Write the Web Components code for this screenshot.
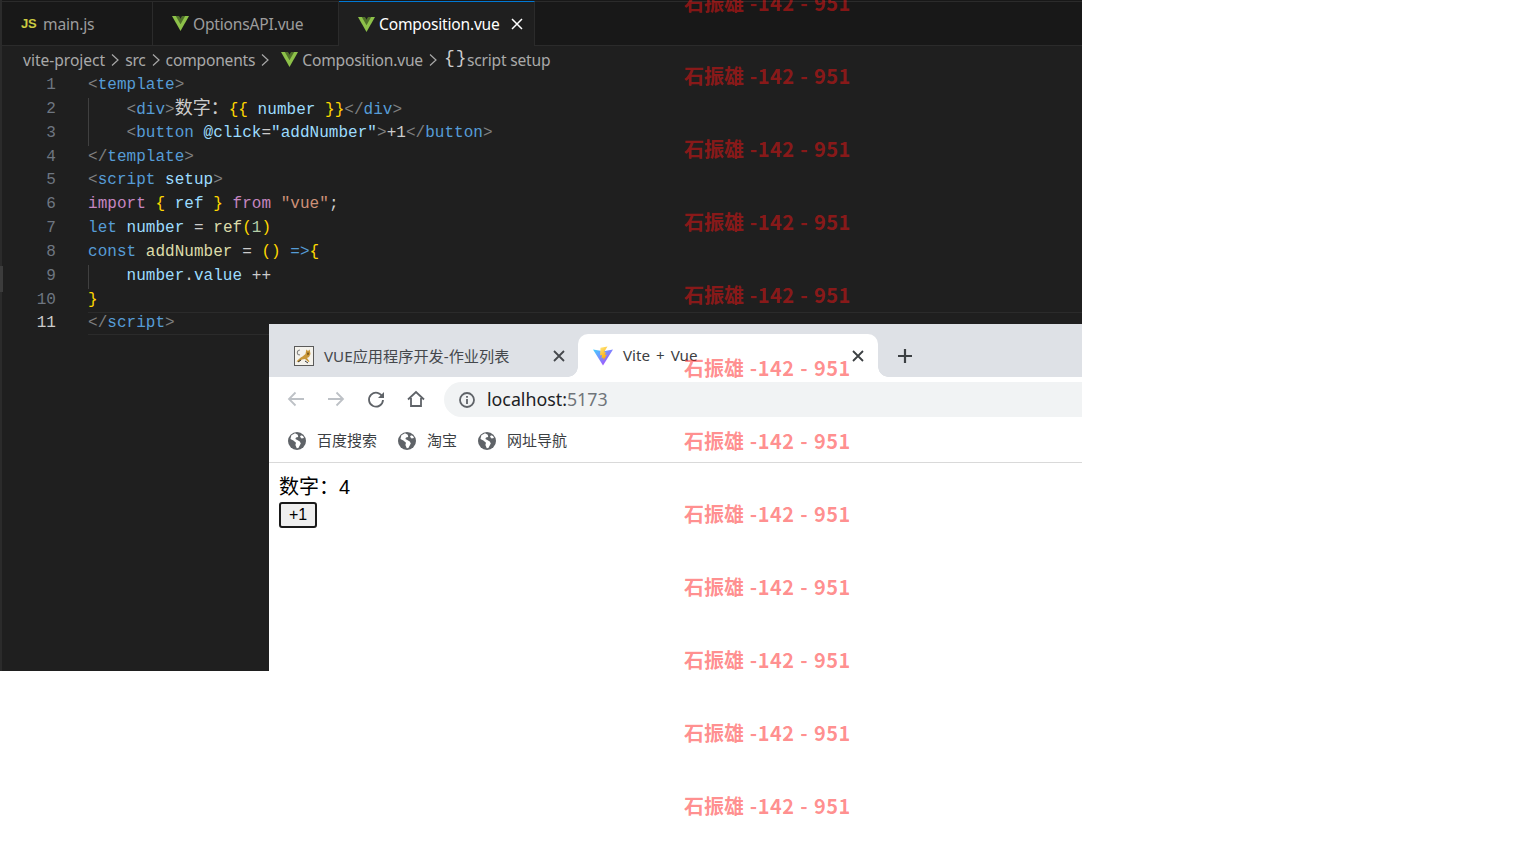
<!DOCTYPE html>
<html><head><meta charset="utf-8"><style>
html,body{margin:0;background:#fff}
</style></head><body>
<desktop-shot>
  <code-editor></code-editor>
  <browser-window></browser-window>
  <water-mark></water-mark>
</desktop-shot>
<script>
const V=(s=17)=>`<svg width="${s}" height="${s}" viewBox="0 0 16 16" style="flex:none"><path d="M0 1h16L8 15z" fill="#8dc149"/><path d="M3.600 1h2.800L8 3.800 9.600 1h2.800L8 8.800z" fill="#4f7029"/><path d="M6.400 1h3.200L8 3.800z" fill="#1f1f1f"/></svg>`;
const chev=`<svg width="10" height="16" viewBox="0 0 10 16" style="flex:none"><path d="M2 2.500 8 8l-6 5.500" fill="none" stroke="#a8a8a8" stroke-width="1.200"/></svg>`;
function def(name,css,html){customElements.define(name,class extends HTMLElement{constructor(){super();this.attachShadow({mode:'open'}).innerHTML=`<style>${css}</style>${typeof html==='function'?html(this):html}`}})}

def('desktop-shot',`:host{display:block;position:relative;width:1536px;height:864px;overflow:hidden;background:#fff}`,`<slot></slot>`);

const ui=`"Noto Sans","Noto Sans CJK SC",sans-serif`;
def('code-editor',`
:host{display:flex;flex-direction:column;position:relative;width:1082px;height:671px;background:#1f1f1f;font-family:${ui};color:#9d9d9d;box-sizing:border-box;border-left:2px solid #2b2b2b}
:host::before{content:"";position:absolute;left:-2px;top:266px;width:3px;height:26px;background:#3c3c3c}
.top{height:1px;background:#181818}
.tabs{display:flex;height:43px;background:#181818;border-top:1px solid #2b2b2b;border-bottom:1px solid #2b2b2b}
.tab{display:flex;align-items:center;box-sizing:border-box;height:43px;border-right:1px solid #2b2b2b;font-size:15.600px;letter-spacing:-.2px}
.t1{width:151px;padding-left:19px;gap:8px}
.t2{width:186px;padding-left:19px;gap:4px}
.t3{width:196px;padding-left:19px;gap:4px;background:#1f1f1f;color:#fff;border-top:1px solid #0078d4;margin-top:-1px;height:45px;margin-bottom:-1px;position:relative}
.js{font:bold 13px "Liberation Sans",sans-serif;color:#cbcb41;width:14px;letter-spacing:-.3px}
.x{margin-left:6px;display:flex}
.crumbs{display:flex;align-items:center;height:27px;padding-left:21px;font-size:15.600px;letter-spacing:-.2px;color:#a9a9a9;gap:5px}
.crumbs .first{letter-spacing:-.03px}
.crumbs .m{margin-left:6px}
.crumbs .br{color:#ccc;font:18px "Liberation Mono",monospace;letter-spacing:1px;width:18px;margin:-3px 0 0 1px;white-space:pre}
.code{display:block;position:relative;margin-top:1px;font:16px/23.850px "Liberation Mono","Noto Sans CJK SC",monospace;white-space:pre;color:#ccc;letter-spacing:.03px}
.l{display:flex;height:23.850px;position:relative}
.n{width:54px;text-align:right;color:#6e7681;flex:none;margin-right:32px}
.cur .n{color:#ccc}
.cur::after{content:"";position:absolute;left:86px;right:0;top:0;bottom:1px;border-top:1px solid #2b2b2b;border-bottom:1px solid #2b2b2b;pointer-events:none}
.g{color:#808080}.b{color:#569cd6}.a{color:#9cdcfe}.y{color:#ffd700}.p{color:#c586c0}.s{color:#ce9178}.f{color:#dcdcaa}.nu{color:#b5cea8}.t{color:#ccc}
.cj{font-size:18px;letter-spacing:0}
.ind{position:absolute;left:86px;top:0;bottom:0;width:1px;background:#404040}
`,()=>{
const lines=[
`<span class="g">&lt;</span><span class="b">template</span><span class="g">&gt;</span>`,
`    <span class="g">&lt;</span><span class="b">div</span><span class="g">&gt;</span><span class="t cj">数字：</span><span class="y">{{</span><span class="a"> number </span><span class="y">}}</span><span class="g">&lt;/</span><span class="b">div</span><span class="g">&gt;</span>`,
`    <span class="g">&lt;</span><span class="b">button</span> <span class="a">@click</span><span class="t">=</span><span class="a">"addNumber"</span><span class="g">&gt;</span><span class="t">+1</span><span class="g">&lt;/</span><span class="b">button</span><span class="g">&gt;</span>`,
`<span class="g">&lt;/</span><span class="b">template</span><span class="g">&gt;</span>`,
`<span class="g">&lt;</span><span class="b">script</span> <span class="a">setup</span><span class="g">&gt;</span>`,
`<span class="p">import</span> <span class="y">{</span> <span class="a">ref</span> <span class="y">}</span> <span class="p">from</span> <span class="s">"vue"</span><span class="t">;</span>`,
`<span class="b">let</span> <span class="a">number</span> <span class="t">=</span> <span class="f">ref</span><span class="y">(</span><span class="nu">1</span><span class="y">)</span>`,
`<span class="b">const</span> <span class="f">addNumber</span> <span class="t">=</span> <span class="y">()</span> <span class="b">=&gt;</span><span class="y">{</span>`,
`    <span class="a">number</span><span class="t">.</span><span class="a">value</span> <span class="t">++</span>`,
`<span class="y">}</span>`,
`<span class="g">&lt;/</span><span class="b">script</span><span class="g">&gt;</span>`];
const ind=[0,1,1,0,0,0,0,0,1,0,0];
return `<div class="top"></div><div class="tabs">
<div class="tab t1"><span class="js">JS</span><span>main.js</span></div>
<div class="tab t2">${V()}<span>OptionsAPI.vue</span></div>
<div class="tab t3">${V()}<span>Composition.vue</span><span class="x"><svg width="14" height="14" viewBox="0 0 14 14"><path d="M2 2l10 10M12 2 2 12" stroke="#fff" stroke-width="1.500"/></svg></span></div>
</div>
<div class="crumbs"><span class="first">vite-project</span>${chev}<span>src</span>${chev}<span>components</span>${chev}<span class="m" style="display:flex;gap:4px;align-items:center">${V()}<span>Composition.vue</span></span>${chev}<span class="br">{}</span><span>script setup</span></div>
<div class="code">${lines.map((l,i)=>`<div class="l${i==10?' cur':''}">${ind[i]?'<i class="ind"></i>':''}<span class="n">${i+1}</span><span class="c">${l}</span></div>`).join('')}</div>`;
});

const globe=`<svg width="18" height="18" viewBox="0 0 18 18" style="flex:none"><circle cx="9" cy="9" r="9" fill="#5f6368"/><path d="M7 1.200 3.400 3.200 2.400 7l3 1.400 2.600 2.400-.6 2.200 1.400 3.200 1.600-.2 2.400-4.400-1-2.200-3-1.600-1.400-.8.6-1.400 2.200-.6-.4-2.200zM13 3.200l-1 1.600 1.600 1.800 2.400-.6-1-2z" fill="#fff"/></svg>`;
const tomcat=`<svg width="20" height="20" viewBox="0 0 20 20" style="flex:none"><rect x=".5" y=".5" width="19" height="19" fill="#f4f2ec" stroke="#5a5a5a"/><path d="M2.500 15.500c2-2 3.500-4 6-5l3-2.500 .8-4.500 1.700 1.500 1.700-1.500 .8 4.500-1.500 3-2 1 2.500 3.500-1 .5-3.500-3-3 .5-3 2.500z" fill="#c9983a"/><path d="M12.800 6.200l1.200.8 1.200-.8-.4 2.600-1.400.5z" fill="#7d5a1c"/><path d="M6 4C3.500 4 2.500 6.500 4 8.500l2 .5" fill="none" stroke="#808080" stroke-width="1.100"/><path d="M4 16l3-2M11 15l3 2" stroke="#3a3a3a" stroke-width="1"/></svg>`;
const vite=`<svg width="20" height="20" viewBox="0 0 20 20" style="flex:none"><defs><linearGradient id="a" x1="0" y1="0" x2="1" y2="1"><stop offset="0" stop-color="#41d1ff"/><stop offset="1" stop-color="#bd34fe"/></linearGradient><linearGradient id="b" x1="0" y1="0" x2=".4" y2="1"><stop offset="0" stop-color="#ffea83"/><stop offset="1" stop-color="#ffa800"/></linearGradient></defs><path d="M0 3.500 10 19.500 20 3.500 10.500 5.200z" fill="url(#a)"/><path d="M14.500.5 7.500 1.800 7 9.500 9 9 8.500 12.500 10.500 11.500 10.500 14.500 14 8.500 12 9 12.800 6 11 6.300z" fill="url(#b)"/></svg>`;
const gx=c=>`<svg width="12" height="12" viewBox="0 0 12 12" style="flex:none"><path d="M1 1l10 10M11 1 1 11" stroke="${c}" stroke-width="1.800"/></svg>`;
const nav=(d,c)=>`<svg width="20" height="20" viewBox="0 0 20 20" style="flex:none"><path d="${d}" fill="none" stroke="${c}" stroke-width="1.800"/></svg>`;
def('browser-window',`
:host{position:absolute;left:269px;top:324px;width:813px;height:347px;background:#fff;display:flex;flex-direction:column;font-family:"Noto Sans","Noto Sans CJK SC",sans-serif;overflow:hidden}
.strip{height:53px;background:#dee1e6;display:flex;align-items:flex-end;box-sizing:border-box}
.tab{height:43px;display:flex;align-items:center;font-size:15.200px;color:#45484c;box-sizing:border-box;position:relative}
.tab .grow{margin-bottom:2px}
.off{width:309px;padding:0 13px 0 25px;gap:10px;border-radius:0 0 10px 0}
.on{width:300px;background:#fff;border-radius:10px 10px 0 0;padding:0 14px 0 15px;gap:10px;color:#3c4043}
.on .grow{word-spacing:2px}
.on::before,.on::after{content:"";position:absolute;bottom:0;width:10px;height:10px}
.on::before{left:-10px;background:radial-gradient(circle at 0 0,#dee1e6 9.500px,#fff 10px)}
.on::after{right:-10px;background:radial-gradient(circle at 100% 0,#dee1e6 9.500px,#fff 10px)}
.grow{flex:1}
.plus{margin-left:19px;margin-bottom:13px;display:flex}
.bar{height:43px;display:flex;align-items:center;padding-left:17px;gap:20px}
.omni{flex:1;height:35px;margin-top:2px;background:#f1f3f4;border-radius:18px 0 0 18px;margin-left:-2px;display:flex;align-items:center;padding-left:14px;font:17.800px "Noto Sans",sans-serif;color:#70757a;gap:11px}
.omni span{margin-bottom:2px}
.omni b{font-weight:400;color:#202124}
.marks{height:43px;display:flex;align-items:center;padding-left:19px;border-bottom:1px solid #d9d9d9;box-sizing:border-box;font-size:15px;color:#3c4043}
.mk{display:flex;align-items:center;gap:11px;margin-right:21px}
.mk span{margin-bottom:3px}
.page{padding:12px 10px;font:20px/24px "Liberation Sans","Noto Sans CJK SC",sans-serif;color:#000}
button{display:block;margin-top:3px;font:16px/17px "Liberation Sans",sans-serif;width:38px;height:26px;padding:0 0 1px;background:#efefef;border:2px solid #1a1a1a;border-radius:3px;color:#000}
`,`<div class="strip">
<div class="tab off">${tomcat}<span class="grow">VUE应用程序开发-作业列表</span>${gx('#45484c')}</div>
<div class="tab on">${vite}<span class="grow">Vite + Vue</span>${gx('#3c4043')}</div>
<span class="plus"><svg width="16" height="16" viewBox="0 0 16 16"><path d="M8 1v14M1 8h14" stroke="#3c4043" stroke-width="2.200"/></svg></span>
</div>
<div class="bar">
${nav('M18 10H3M9.500 3.500 3 10l6.500 6.500','#bdc1c6')}
${nav('M2 10h15M10.500 3.500 17 10l-6.500 6.500','#bdc1c6')}
<svg width="20" height="20" viewBox="0 0 20 20" style="flex:none"><path d="M16.500 8A7 7 0 1 0 17 11" fill="none" stroke="#5f6368" stroke-width="1.800"/><path d="M18 3v6h-6z" fill="#5f6368"/></svg>
<svg width="20" height="20" viewBox="0 0 20 20" style="flex:none"><path d="M2 10.500 10 3l8 7.500M5 9v8h10V9" fill="none" stroke="#5f6368" stroke-width="1.800"/></svg>
<div class="omni"><svg width="18" height="18" viewBox="0 0 18 18" style="flex:none"><circle cx="9" cy="9" r="7" fill="none" stroke="#5f6368" stroke-width="1.800"/><path d="M9 8v5M9 5v1.800" stroke="#5f6368" stroke-width="1.800"/></svg><span><b>localhost:</b>5173</span></div>
</div>
<div class="marks">
<div class="mk">${globe}<span>百度搜索</span></div>
<div class="mk">${globe}<span>淘宝</span></div>
<div class="mk">${globe}<span>网址导航</span></div>
</div>
<div class="page">数字：4<button>+1</button></div>`);

def('water-mark',`
:host{position:absolute;left:684px;top:-34px;display:grid;grid-auto-rows:73px;pointer-events:none;font:bold 20px/73px "Noto Sans CJK SC","Noto Sans",sans-serif;color:rgba(255,20,20,.49);white-space:pre}
i{font-style:normal;letter-spacing:.5px;word-spacing:.7px}
`,Array(12).fill('<div>石振雄<i> -142 - 951</i></div>').join(''));
</script>
</body></html>
